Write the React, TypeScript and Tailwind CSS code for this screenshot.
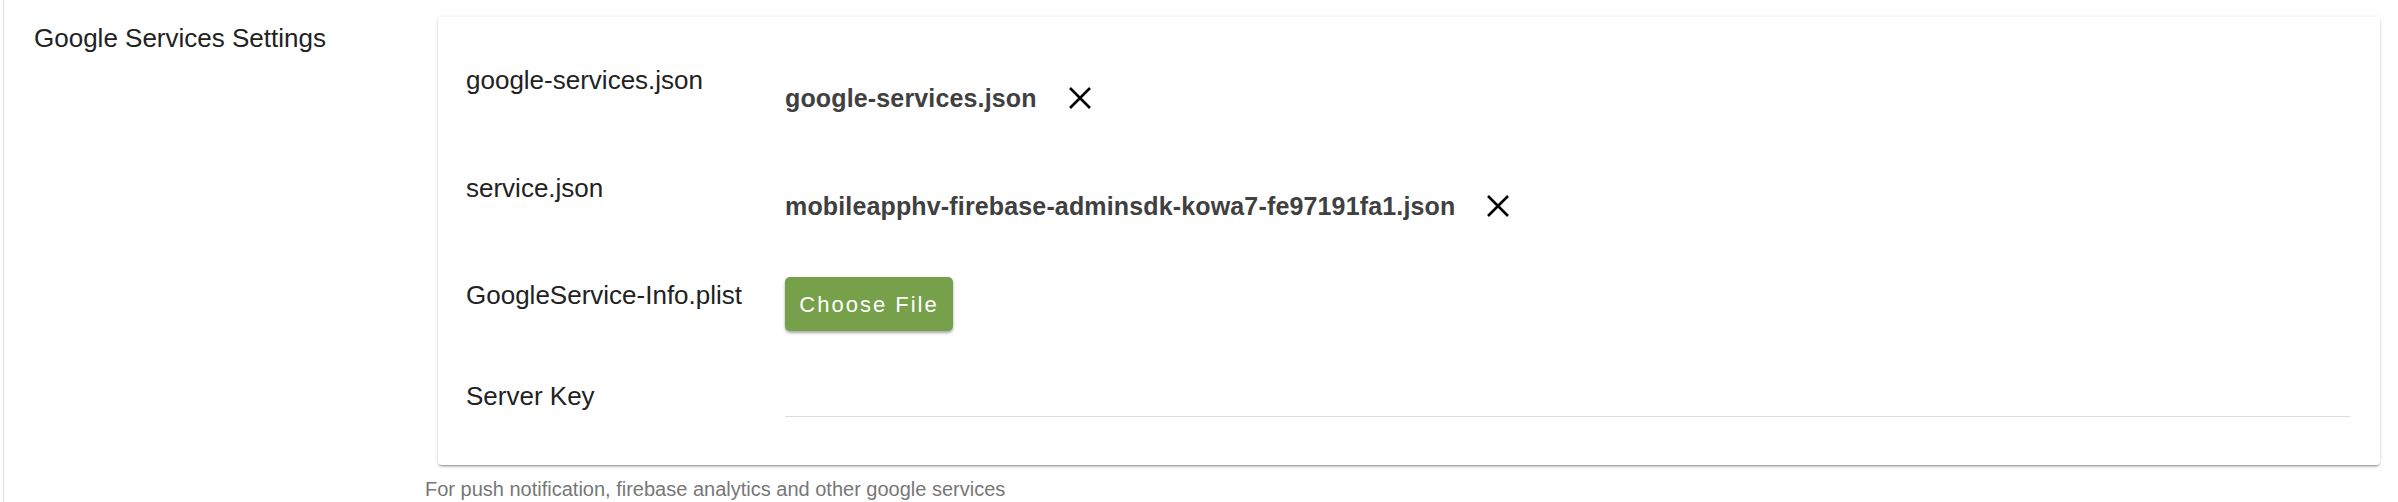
const rows = [
    { label: 'google-services.json', file: 'google-services.json', height: 'h-[108px]' },
    { label: 'service.json', file: 'mobileapphv-firebase-adminsdk-kowa7-fe97191fa1.json', height: 'h-[107px]' },
];

function CloseIcon() {
    return (
        <svg width="26" height="26" viewBox="0 0 26 26" fill="none" stroke="currentColor" strokeWidth="2.6">
            <path d="M3 3 L23 23 M23 3 L3 23" />
        </svg>
    );
}

export default function App() {
    return (
        <div className="w-[2398px] h-[502px] bg-white font-['Liberation_Sans',Arial,sans-serif] overflow-hidden">
            <div className="ml-[3px] h-full border-l border-[#e2e2e2] pt-[17px] flex">
                {/* Section title */}
                <div className="w-[434px] shrink-0 pl-[30px] pt-[6px]">
                    <h2 className="text-[26px] leading-[30px] text-[#222]">Google Services Settings</h2>
                </div>

                <div className="flex-1 mr-[18px] -ml-[13px]">
                    {/* Card */}
                    <div className="ml-[13px] bg-white rounded-[4px] shadow-[0_2px_2px_rgba(0,0,0,0.14),0_3px_1px_-2px_rgba(0,0,0,0.2),0_1px_5px_rgba(0,0,0,0.12)] pt-[48px] pb-[48px] pl-[28px] pr-[30px]">
                        {rows.map((row) => (
                            <div key={row.label} className={`flex ${row.height}`}>
                                <div className="w-[319px] shrink-0 text-[26px] leading-[30px] text-[#222]">{row.label}</div>
                                <div className="pt-[18px] flex items-center h-[48px]">
                                    <span className="text-[25px] leading-[30px] font-bold text-[#404040] tracking-[0.15px]">{row.file}</span>
                                    <button className="ml-[30px] text-black">
                                        <CloseIcon />
                                    </button>
                                </div>
                            </div>
                        ))}

                        <div className="flex h-[101px]">
                            <div className="w-[319px] shrink-0 text-[26px] leading-[30px] text-[#222]">GoogleService-Info.plist</div>
                            <div className="-mt-[3px]">
                                <button className="h-[54px] w-[168px] rounded-[5px] bg-[#76a04a] text-white text-[22px] font-medium tracking-[2px] shadow-[0_2px_3px_rgba(0,0,0,0.35)]">
                                    Choose File
                                </button>
                            </div>
                        </div>

                        <div className="flex h-[36px]">
                            <div className="w-[319px] shrink-0 text-[26px] leading-[30px] text-[#222]">Server Key</div>
                            <div className="flex-1 border-b border-[#dcdcdc]"></div>
                        </div>
                    </div>

                    {/* Helper */}
                    <p className="mt-[12px] text-[20px] leading-[24px] text-[#777]">
                        For push notification, firebase analytics and other google services
                    </p>
                </div>
            </div>
        </div>
    );
}
